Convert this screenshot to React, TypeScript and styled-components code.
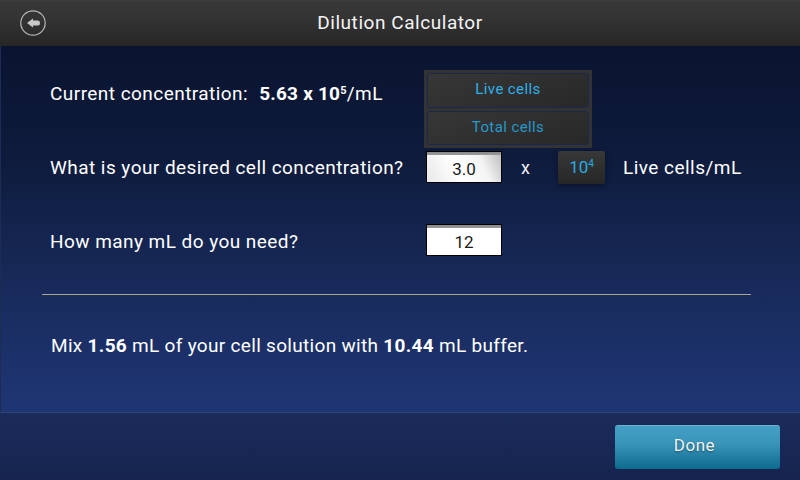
import styled, { createGlobalStyle } from "styled-components";

const GlobalStyle = createGlobalStyle`
  html, body {
    margin: 0;
    padding: 0;
    background: #0b1630;
  }
  body {
    font-family: Roboto, "Open Sans", sans-serif;
  }
`;

const Screen = styled.div`
  width: 800px;
  height: 480px;
  display: flex;
  flex-direction: column;
  overflow: hidden;
  color: #fff;
`;

const Header = styled.header`
  position: relative;
  height: 46px;
  flex: none;
  display: flex;
  align-items: center;
  justify-content: center;
  box-sizing: border-box;
  padding-bottom: 2px;
  background: linear-gradient(#3e3e3e 0, #383838 2px, #333 20px, #262626 100%);
`;

const BackButton = styled.button`
  position: absolute;
  left: 20px;
  top: 9px;
  width: 28px;
  height: 28px;
  padding: 0;
  border: none;
  background: none;
  display: block;
`;

const Title = styled.h1`
  margin: 0;
  font-size: 19px;
  font-weight: 400;
  letter-spacing: 0.55px;
  color: #f4f4f4;
`;

const Main = styled.main`
  flex: 1;
  box-sizing: border-box;
  padding: 24px 49px 0 41px;
  border-left: 1px solid #1d2c55;
  border-bottom: 1px solid #33436f;
  background: linear-gradient(#0a1430 0, #0e1b3c 30%, #192c5e 70%, #1f3675 100%);
`;

const Row = styled.div<{ $gap?: number }>`
  position: relative;
  height: 46px;
  display: grid;
  grid-template-columns: 376px 76px 56px 65px 1fr;
  align-items: center;
  padding-left: 8px;
  margin-bottom: ${({ $gap }) => $gap ?? 28}px;
`;

const Label = styled.div`
  font-size: 19px;
  letter-spacing: 0.45px;
  white-space: nowrap;
  sup {
    font-size: 11px;
    line-height: 0;
    vertical-align: 6px;
  }
`;

const Concentration = styled.b`
  margin-left: 11px;
  font-weight: 700;
  letter-spacing: 0.22px;
`;

const Input = styled.div<{ $shaded?: boolean; $lift?: number }>`
  width: 76px;
  height: 32px;
  box-sizing: border-box;
  border: 1px solid #000;
  padding-top: 4px;
  margin-bottom: ${({ $lift }) => $lift ?? 0}px;
  display: flex;
  align-items: center;
  justify-content: center;
  color: #1a1a1a;
  font-size: 17px;
  background: ${({ $shaded }) =>
    $shaded
      ? "linear-gradient(#8a8a8a 0, #9a9a9a 3px, transparent 3px), linear-gradient(245deg, #bdbdbd 0, #f4f4f4 28%, #fff 60%, #e8e8e8 100%)"
      : "linear-gradient(#8a8a8a 0, #9a9a9a 3px, #fff 3px, #fff 100%)"};
`;

const Times = styled.div`
  font-size: 18px;
  color: #eee;
  padding-left: 19px;
`;

const ExponentButton = styled.button`
  width: 47px;
  height: 33px;
  padding: 0;
  border: none;
  border-radius: 2px;
  font: inherit;
  font-size: 17px;
  color: #29abe2;
  background: linear-gradient(#383838, #262626);
  box-shadow: 0 2px 5px rgba(5, 10, 25, 0.5);
  sup {
    font-size: 10px;
    line-height: 0;
    vertical-align: 6px;
  }
`;

const Unit = styled.div`
  font-size: 19px;
  letter-spacing: 0.47px;
  white-space: nowrap;
`;

/* dropdown that stays open above the second row */
const Menu = styled.div`
  position: absolute;
  left: 382px;
  top: 0;
  width: 168px;
  height: 78px;
  box-sizing: border-box;
  padding: 3px;
  display: flex;
  flex-direction: column;
  gap: 3px;
  background: #333;
  z-index: 2;
`;

const MenuItem = styled.button<{ $active?: boolean }>`
  flex: 1;
  padding: 0 0 2px;
  border: 1px solid #1a2850;
  border-radius: 3px;
  font: inherit;
  font-size: 15px;
  letter-spacing: 0.4px;
  color: ${({ $active }) => ($active ? "#2fb0ea" : "#2598cc")};
  background: linear-gradient(160deg, #373737, #282828);
`;

const Divider = styled.hr`
  height: 1px;
  margin: 0;
  border: none;
  background: #aca78c;
`;

const Result = styled.p`
  margin: 39px 0 0 9px;
  font-size: 19px;
  letter-spacing: 0.31px;
  b {
    font-weight: 700;
  }
`;

const Footer = styled.footer`
  height: 67px;
  flex: none;
  box-sizing: border-box;
  display: flex;
  align-items: flex-start;
  justify-content: flex-end;
  padding: 12px 20px 0 0;
  background: linear-gradient(#1b2b5b, #16244f);
`;

const DoneButton = styled.button`
  width: 165px;
  height: 44px;
  padding: 0 6px 5px 0;
  border: none;
  border-top: 1px solid #6fb0cf;
  border-radius: 3px;
  font: inherit;
  font-size: 17px;
  letter-spacing: 0.5px;
  color: #f2f2f2;
  text-shadow: 0 1px 2px rgba(0, 0, 0, 0.4);
  background: linear-gradient(#43a0c4 0, #3a95ba 40%, #0f6a90 100%);
`;

const BackIcon = () => (
  <svg width="28" height="28" viewBox="0 0 28 28">
    <circle cx="13" cy="14" r="12.2" fill="none" stroke="#b8b8b8" strokeWidth="1.2" />
    <path
      d="M7 14 L13 9.5 V11.5 H18 Q20 11.5 20 14 Q20 16.5 18 16.5 H13 V18.5 Z"
      fill="#c8c8c8"
    />
  </svg>
);

export default function App() {
  return (
    <>
      <GlobalStyle />
      <Screen>
        <Header>
          <BackButton aria-label="Back">
            <BackIcon />
          </BackButton>
          <Title>Dilution Calculator</Title>
        </Header>
        <Main>
          <Row>
            <Label>
              Current concentration:
              <Concentration>
                5.63 x 10<sup>5</sup>
              </Concentration>
              /mL
            </Label>
            <Menu>
              <MenuItem $active>Live cells</MenuItem>
              <MenuItem>Total cells</MenuItem>
            </Menu>
          </Row>
          <Row>
            <Label>What is your desired cell concentration?</Label>
            <Input $shaded>3.0</Input>
            <Times>x</Times>
            <ExponentButton>
              10<sup>4</sup>
            </ExponentButton>
            <Unit>Live cells/mL</Unit>
          </Row>
          <Row $gap={30}>
            <Label>How many mL do you need?</Label>
            <Input $lift={2}>12</Input>
          </Row>
          <Divider />
          <Result>
            Mix <b>1.56</b> mL of your cell solution with <b>10.44</b> mL buffer.
          </Result>
        </Main>
        <Footer>
          <DoneButton>Done</DoneButton>
        </Footer>
      </Screen>
    </>
  );
}
